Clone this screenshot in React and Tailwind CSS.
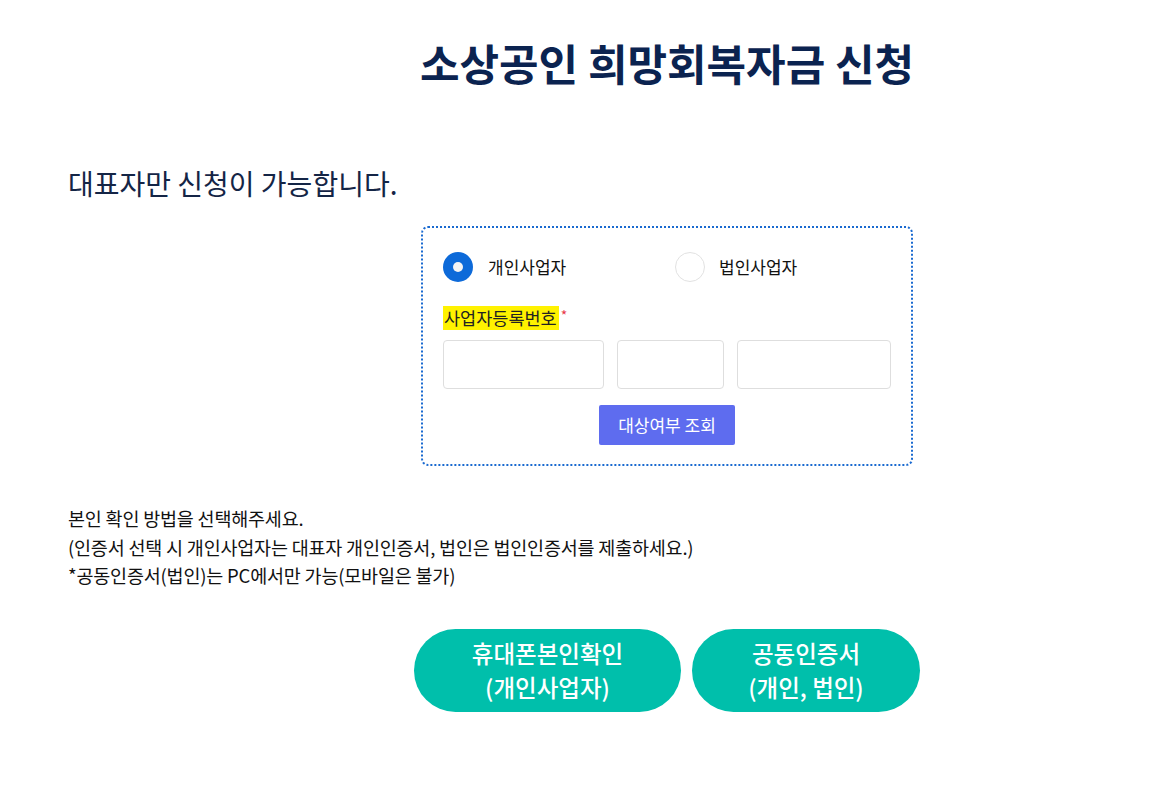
export default function App() {
  const font = { fontFamily: '"Noto Sans CJK KR", "Noto Sans", sans-serif' };
  return (
    <div className="min-h-[795px] w-[1167px] bg-white" style={font}>
      <div className="pl-[68px] pt-[30px]">
        {/* Title */}
        <h1 className="ml-[340px] w-[518px] text-center text-[43px] font-bold leading-[64px] text-[#0b2350]">
          소상공인 희망회복자금 신청
        </h1>

        <p className="mt-[68px] text-[28px] leading-[42px] text-[#142546]">
          대표자만 신청이 가능합니다.
        </p>

        {/* Form box */}
        <div className="ml-[353px] mt-[22px] h-[240px] w-[492px] rounded-[7px] border-2 border-dotted border-[#1a6ad0] px-[20px] pt-[24px]">
          <div className="flex items-center">
            <div className="flex w-[232px] items-center">
              <span className="flex h-[30px] w-[30px] items-center justify-center rounded-full bg-[#0d6ad9]">
                <span className="h-[10px] w-[10px] rounded-full bg-[#f4f4f4]" />
              </span>
              <span className="ml-[15px] text-[17px] text-[#111]">개인사업자</span>
            </div>
            <div className="flex items-center">
              <span className="h-[30px] w-[30px] rounded-full border border-[#e2e2e2] bg-white" />
              <span className="ml-[14px] text-[17px] text-[#111]">법인사업자</span>
            </div>
          </div>

          <div className="mt-[24px] flex items-start">
            <span className="bg-[#fff200] pl-[1px] pr-[2px] text-[17.5px] leading-[24px] text-[#222]">
              사업자등록번호
            </span>
            <span className="ml-[2px] text-[14px] leading-[18px] text-[#e8394a]">*</span>
          </div>

          <div className="mt-[10px] flex gap-[13px]">
            <div className="h-[49px] w-[162px] rounded-[4px] border border-[#dedede] bg-white" />
            <div className="h-[49px] w-[108px] rounded-[4px] border border-[#dedede] bg-white" />
            <div className="h-[49px] w-[155px] rounded-[4px] border border-[#dedede] bg-white" />
          </div>

          <div className="mt-[16px] flex justify-center">
            <button className="h-[40px] w-[136px] rounded-[2px] bg-[#5e6cef] text-[17px] text-white">
              대상여부 조회
            </button>
          </div>
        </div>

        {/* Notice */}
        <div className="mt-[38px] text-[18.5px] leading-[28.5px] tracking-[-0.2px] text-[#111]">
          <p>본인 확인 방법을 선택해주세요.</p>
          <p>(인증서 선택 시 개인사업자는 대표자 개인인증서, 법인은 법인인증서를 제출하세요.)</p>
          <p>*공동인증서(법인)는 PC에서만 가능(모바일은 불가)</p>
        </div>

        {/* Buttons */}
        <div className="ml-[346px] mt-[39px] flex gap-[11px]">
          <button className="flex h-[83px] w-[267px] flex-col items-center justify-center rounded-full bg-[#00bfab] text-[23.5px] font-medium leading-[34px] text-white">
            <span>휴대폰본인확인</span>
            <span>(개인사업자)</span>
          </button>
          <button className="flex h-[83px] w-[228px] flex-col items-center justify-center rounded-full bg-[#00bfab] text-[23.5px] font-medium leading-[34px] text-white">
            <span>공동인증서</span>
            <span>(개인, 법인)</span>
          </button>
        </div>
      </div>
    </div>
  );
}
